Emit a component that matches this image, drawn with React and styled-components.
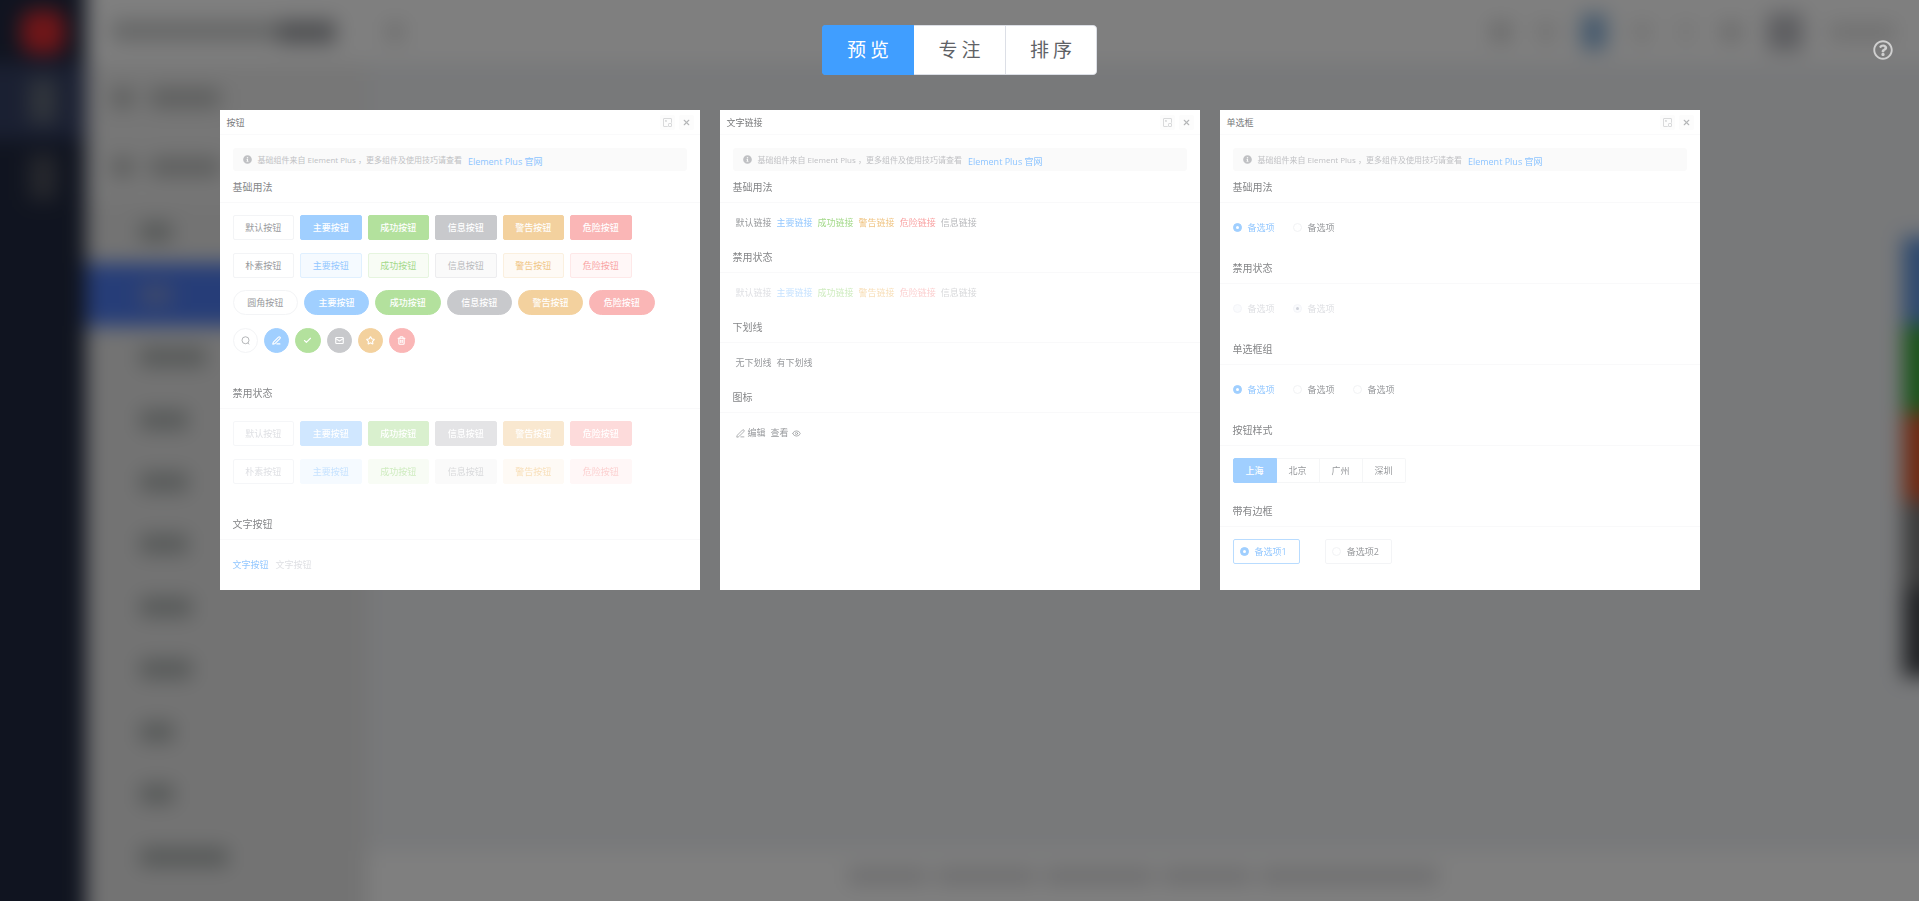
import React from "react";
import styled, { createGlobalStyle, css } from "styled-components";
import { PenLine, Check, Mail, Star, Trash2, Eye, X } from "lucide-react";
import { FaRegQuestionCircle, FaInfoCircle } from "react-icons/fa";

const GlobalStyle = createGlobalStyle`
  *, *::before, *::after { box-sizing: border-box; }
  body {
    margin: 0;
    background: #f0f2f5;
    font-family: "Open Sans", "Noto Sans CJK SC", sans-serif;
  }
  button, input { font: inherit; margin: 0; }
  svg { display: block; flex: none; }
`;

const tones = {
  default: { solid: "#ffffff", edge: "#f3f4f6", text: "#97999c", faint: "#dfe0e4", soft: "#ffffff", softEdge: "#f3f4f6", pale: "#ffffff" },
  primary: { solid: "#a0cfff", edge: "#a0cfff", text: "#92c7ff", faint: "#c6e2ff", soft: "#f5faff", softEdge: "#e0f0ff", pale: "#d0e7ff" },
  success: { solid: "#b3e19d", edge: "#b3e19d", text: "#a3d989", faint: "#cfecc0", soft: "#f8fcf5", softEdge: "#e6f5df", pale: "#d9f0ce" },
  info: { solid: "#c8c9cc", edge: "#c8c9cc", text: "#b8b9bc", faint: "#d8d9db", soft: "#fafafa", softEdge: "#ededef", pale: "#e4e4e6" },
  warning: { solid: "#f3d19e", edge: "#f3d19e", text: "#f0c584", faint: "#f8dfb9", soft: "#fefaf5", softEdge: "#fbf0df", pale: "#f9e8d0" },
  danger: { solid: "#fab6b6", edge: "#fab6b6", text: "#f9a3a3", faint: "#fcd0d0", soft: "#fff7f7", softEdge: "#fee8e8", pale: "#fddbdb" },
};

/* ---------- application behind the overlay ---------- */

/* The blurred layer bleeds past the window so its edges never fade out. */
const bleed = 30;

const Backdrop = styled.div`
  position: fixed;
  inset: -${bleed}px;
  display: flex;
  overflow: hidden;
  filter: blur(10px);
`;

const Rail = styled.div`
  flex: none;
  width: ${86 + bleed}px;
  padding-top: ${bleed}px;
  background: #212940;
`;

const RailLogo = styled.div`
  height: 63px;
  display: flex;
  align-items: center;
  justify-content: center;
  padding-left: ${bleed}px;
  &::after {
    content: "";
    width: 44px;
    height: 44px;
    border-radius: 14px;
    background: #e02c32;
  }
`;

const RailItem = styled.div`
  height: 76px;
  display: flex;
  align-items: center;
  justify-content: center;
  padding-left: ${bleed}px;
  background: ${(p) => (p.$active ? "#354064" : "transparent")};
  &::after {
    content: "";
    width: 28px;
    height: 46px;
    background: ${(p) => (p.$active ? "#626a78" : "#4c4f5a")};
  }
`;

const Shell = styled.div`
  flex: 1;
  min-width: 0;
  display: flex;
  flex-direction: column;
`;

const TopBar = styled.div`
  flex: none;
  height: ${63 + bleed}px;
  display: flex;
  align-items: center;
  gap: 26px;
  padding: ${bleed}px ${24 + bleed}px 0 26px;
  background: #ffffff;
`;

const Smudge = styled.div`
  flex: none;
  width: ${(p) => p.$w}px;
  height: ${(p) => p.$h || 20}px;
  background: ${(p) => p.$c || "#c8cccb"};
`;

const Spacer = styled.div`
  flex: 1;
`;

const Brand = styled.div`
  display: flex;
  margin-right: 24px;
`;

const Body = styled.div`
  flex: 1;
  min-height: 0;
  display: flex;
`;

const SideMenu = styled.div`
  flex: none;
  width: 281px;
  background: #e7e7e7;
`;

const MenuGroup = styled.div`
  height: 69px;
  display: flex;
  align-items: center;
  gap: 16px;
  padding-left: 26px;
  background: #eeeeee;
`;

const MenuList = styled.div`
  display: grid;
  grid-auto-rows: 1fr;
  height: 687px;
`;

const MenuItem = styled.div`
  display: flex;
  align-items: center;
  padding-left: 54px;
  background: ${(p) => (p.$active ? "#4d7bf0" : "transparent")};
`;

const Content = styled.div`
  flex: 1;
  display: flex;
  flex-direction: column;
  background: #f0f2f5;
`;

const Workspace = styled.div`
  flex: 1;
  display: flex;
  align-items: center;
  justify-content: flex-end;
`;

const Swatches = styled.div`
  width: ${16 + bleed}px;
`;

const Swatch = styled.div`
  height: 88px;
  background: ${(p) => p.$c};
`;

const Footer = styled.div`
  height: ${50 + bleed}px;
  display: flex;
  align-items: center;
  justify-content: center;
  gap: 8px;
  padding: 0 ${bleed}px ${bleed}px 0;
  background: #ffffff;
`;

/* ---------- overlay ---------- */

const Overlay = styled.main`
  position: relative;
  min-height: 100vh;
  padding: 25px 26px;
  background: rgba(0, 0, 0, 0.5);
`;

const Toolbar = styled.header`
  display: grid;
  grid-template-columns: 1fr auto 1fr;
  align-items: center;
  margin-bottom: 35px;
`;

const Modes = styled.div`
  grid-column: 2;
  display: flex;
  height: 50px;
  border-radius: 4px;
  overflow: hidden;
`;

const Mode = styled.button`
  width: 92px;
  padding: 0 0 2px 4px;
  border: 1px solid ${(p) => (p.$active ? "#409eff" : "#dcdfe6")};
  border-left-width: ${(p) => (p.$active ? 1 : 0)}px;
  background: ${(p) => (p.$active ? "#409eff" : "#ffffff")};
  color: ${(p) => (p.$active ? "#ffffff" : "#606266")};
  font-size: 19px;
  letter-spacing: 4px;
  &:last-child {
    width: 91px;
    border-radius: 0 4px 4px 0;
  }
`;

const Help = styled.button`
  justify-self: end;
  padding: 0;
  border: 0;
  background: none;
  color: #d0d0d0;
`;

const Cards = styled.div`
  display: flex;
  flex-wrap: wrap;
  justify-content: center;
  gap: 20px;
`;

const Card = styled.section`
  width: 480px;
  min-height: 480px;
  background: #ffffff;
  font-size: 9px;
`;

const CardHeader = styled.div`
  display: flex;
  align-items: center;
  gap: 4px;
  height: 25px;
  padding: 0 6px 0 7px;
  border-bottom: 1px solid #fafafb;
`;

const CardTitle = styled.h2`
  flex: 1;
  margin: 0;
  font-size: 9px;
  font-weight: 400;
  color: #78797b;
`;

const Tool = styled.button`
  width: 15px;
  height: 15px;
  display: grid;
  place-items: center;
  padding: 0;
  border: 0;
  border-radius: 2px;
  background: #fcfcfc;
  color: ${(p) => p.$color};
`;

const Notice = styled.div`
  display: flex;
  align-items: center;
  height: 23px;
  margin: 13px 13px 0;
  padding: 0 10px;
  border-radius: 3px;
  background: #fafafa;
  font-size: 8px;
  color: #c0c1c4;
`;

const NoticeText = styled.p`
  margin: 0 6px;
`;

const NoticeLink = styled.a`
  padding-top: 3px;
  font-size: 9px;
  color: #8ec5ff;
  text-decoration: none;
`;

const Heading = styled.h3`
  height: 32px;
  margin: 0;
  padding: 0 13px;
  border-bottom: 1px solid #f9f9fa;
  font-size: 10px;
  line-height: 32px;
  font-weight: 400;
  color: #858688;
`;

const Block = styled.div`
  padding: 12px 13px 24px;
  &:last-child { padding-bottom: 12px; }
`;

const Rows = styled.div`
  display: grid;
  align-content: space-between;
  height: ${(p) => p.$height}px;
`;

const ButtonRow = styled.div`
  display: grid;
  grid-template-columns: repeat(6, 1fr);
  gap: 6px;
  width: ${(p) => p.$width}px;
`;

const variants = {
  solid: (t, kind) => css`
    background: ${t.solid};
    border-color: ${t.edge};
    color: ${kind === "default" ? t.text : "#ffffff"};
    font-weight: ${kind === "default" ? 400 : 500};
    &:disabled {
      background: ${t.pale};
      border-color: ${kind === "default" ? "#f5f6f8" : t.pale};
      color: ${kind === "default" ? t.faint : "#ffffff"};
    }
  `,
  plain: (t, kind) => css`
    background: ${t.soft};
    border-color: ${t.softEdge};
    color: ${t.text};
    &:disabled {
      border-color: ${kind === "default" ? "#f5f6f8" : t.soft};
      color: ${t.faint};
    }
  `,
};

const Button = styled.button`
  display: flex;
  align-items: center;
  justify-content: center;
  height: 25px;
  padding: 0;
  border: 1px solid;
  border-radius: ${(p) => (p.$round ? 13 : 2)}px;
  font-size: 9px;
  ${(p) => variants[p.$variant](tones[p.$tone], p.$tone)}
`;

const TextButton = styled.button`
  padding: 0;
  margin-right: 7px;
  border: 0;
  background: none;
  line-height: 25px;
  color: ${tones.primary.text};
  &:disabled { color: ${tones.default.faint}; }
`;

const Links = styled.div`
  display: flex;
  gap: 5px;
  padding: 12px 16px 10px;
  line-height: 16px;
`;

const Link = styled.a`
  display: inline-flex;
  align-items: center;
  gap: 3px;
  color: ${(p) => (p.$disabled ? tones[p.$tone].faint : tones[p.$tone].text)};
  text-decoration: none;
`;

const Options = styled.div`
  display: flex;
  gap: ${(p) => p.$gap || 0}px;
  padding: 12px 13px;
`;

const Option = styled.label`
  display: flex;
  align-items: center;
  gap: 6px;
  height: 25px;
  color: ${tones.default.text};
  &:has(input:checked) { color: ${tones.primary.text}; }
  &:has(input:disabled) { color: ${tones.default.faint}; }
  ${(p) =>
    p.$bordered &&
    css`
      padding: 0 12px 0 6px;
      border: 1px solid #f3f4f6;
      border-radius: 2px;
      &:has(input:checked) { border-color: #b9dcff; }
    `}
`;

const Radio = styled.input`
  appearance: none;
  display: grid;
  place-items: center;
  width: 9px;
  height: 9px;
  border: 1px solid #f1f2f4;
  border-radius: 50%;
  background: #ffffff;
  &::before {
    content: "";
    width: 3px;
    height: 3px;
    border-radius: 50%;
  }
  &:checked { border-color: #a0cfff; background: #a0cfff; }
  &:checked::before { background: #ffffff; }
  &:disabled { border-color: #f3f4f8; background: #fafbfd; }
  &:disabled:checked::before { background: #cfd2da; }
`;

const City = styled.label`
  position: relative;
  width: 43px;
  height: 25px;
  border: solid #f5f6f7;
  border-width: 1px 1px 1px 0;
  line-height: 23px;
  text-align: center;
  color: ${tones.default.text};
  &:first-child { width: 44px; border-left-width: 1px; border-radius: 2px 0 0 2px; }
  &:last-child { border-radius: 0 2px 2px 0; }
  &:has(input:checked) {
    background: #a0cfff;
    border-color: #a0cfff;
    color: #ffffff;
    font-weight: 500;
  }
  input {
    position: absolute;
    inset: 0;
    opacity: 0;
  }
`;

const SearchIcon = () => (
  <svg width="9" height="9" viewBox="0 0 18 18" fill="none" stroke="currentColor" strokeWidth="1.4" aria-hidden="true">
    <circle cx="9" cy="8.5" r="7" />
    <path d="M13.5 14l3 2.500" />
  </svg>
);

const ExpandIcon = () => (
  <svg width="9" height="9" viewBox="0 0 18 18" fill="none" stroke="currentColor" strokeWidth="1.6" aria-hidden="true">
    <path d="M9.500 17H2a1 1 0 0 1-1-1V2a1 1 0 0 1 1-1h14a1 1 0 0 1 1 1v7.500" />
    <path d="M5 7.500V5h2.500M5 5l2.500 2.500" />
    <rect x="11" y="11" width="6" height="6" rx="1" />
  </svg>
);

const kinds = [
  ["primary", "主要"],
  ["success", "成功"],
  ["info", "信息"],
  ["warning", "警告"],
  ["danger", "危险"],
];

const icons = [
  ["default", "搜索", SearchIcon],
  ["primary", "编辑", PenLine],
  ["success", "确认", Check],
  ["info", "消息", Mail],
  ["warning", "收藏", Star],
  ["danger", "删除", Trash2],
];

function Buttons({ first, variant = "solid", round, disabled }) {
  return (
    <ButtonRow $width={round ? 422 : 399}>
      {[["default", first], ...kinds].map(([tone, label]) => (
        <Button key={tone} type="button" $tone={tone} $variant={variant} $round={round} disabled={disabled}>
          {label}按钮
        </Button>
      ))}
    </ButtonRow>
  );
}

function LinkRow({ disabled }) {
  const [primary, success, info, warning, danger] = kinds;
  return (
    <Links>
      {[["default", "默认"], primary, success, warning, danger, info].map(([tone, label]) => (
        <Link key={tone} href="#" $tone={tone} $disabled={disabled} aria-disabled={disabled}>
          {label}链接
        </Link>
      ))}
    </Links>
  );
}

function RadioSet({ name, labels, checked, disabled, bordered }) {
  return (
    <Options $gap={bordered ? 25 : 18}>
      {labels.map((label, i) => (
        <Option key={i} $bordered={bordered}>
          <Radio type="radio" name={name} defaultChecked={i === checked} disabled={disabled} />
          {label}
        </Option>
      ))}
    </Options>
  );
}

function Preview({ title, children }) {
  return (
    <Card>
      <CardHeader>
        <CardTitle>{title}</CardTitle>
        <Tool type="button" aria-label="最大化" $color="#cfd0d2"><ExpandIcon /></Tool>
        <Tool type="button" aria-label="关闭" $color="#b4b5b7"><X size={9} strokeWidth={3} /></Tool>
      </CardHeader>
      <Notice>
        <FaInfoCircle size={9} />
        <NoticeText>基础组件来自 Element Plus ，更多组件及使用技巧请查看</NoticeText>
        <NoticeLink href="#">Element Plus 官网</NoticeLink>
      </Notice>
      {children}
    </Card>
  );
}

function Application() {
  return (
    <Backdrop aria-hidden="true">
      <Rail>
        <RailLogo />
        <RailItem $active />
        <RailItem />
      </Rail>
      <Shell>
        <TopBar>
          <Brand>
            <Smudge $w={166} $h={22} $c="#cfd1d1" />
            <Smudge $w={58} $h={24} $c="#a2a4a8" />
          </Brand>
          <Smudge $w={18} $h={20} $c="#dedede" />
          <Spacer />
          <Smudge $w={20} $c="#d4d4d4" />
          <Smudge $w={18} $c="#e4e4e4" />
          <Smudge $w={26} $h={36} $c="#8fb6dc" />
          <Smudge $w={18} $c="#e6e6e6" />
          <Smudge $w={18} $c="#eeeeee" />
          <Smudge $w={20} $c="#d6d6d6" />
          <Smudge $w={36} $h={38} $c="#bdbec4" />
          <Smudge $w={66} $h={18} $c="#e2e2e2" />
        </TopBar>
        <Body>
          <SideMenu>
            <MenuGroup><Smudge $w={22} $c="#bcbebd" /><Smudge $w={70} $c="#bcbebd" /></MenuGroup>
            <MenuGroup><Smudge $w={22} $c="#bcbebd" /><Smudge $w={70} $c="#bcbebd" /></MenuGroup>
            <MenuList>
              {[32, 32, 66, 48, 48, 48, 52, 52, 34, 34, 88].map((w, i) => (
                <MenuItem key={i} $active={i === 1}>
                  <Smudge $w={w} $c={i === 1 ? "#7c93d8" : "#aeb3b2"} />
                </MenuItem>
              ))}
            </MenuList>
          </SideMenu>
          <Content>
            <Workspace>
              <Swatches>
                {["#5c93dc", "#38a838", "#dc5428", "#767676", "#44474c"].map((c) => (
                  <Swatch key={c} $c={c} />
                ))}
              </Swatches>
            </Workspace>
            <Footer>
              {[80, 100, 110, 90, 178].map((w, i) => (
                <Smudge key={i} $w={w} $h={18} $c="#dedee0" />
              ))}
            </Footer>
          </Content>
        </Body>
      </Shell>
    </Backdrop>
  );
}

export default function App() {
  return (
    <>
      <GlobalStyle />
      <Application />
      <Overlay>
        <Toolbar>
          <Modes>
            <Mode type="button" $active>预览</Mode>
            <Mode type="button">专注</Mode>
            <Mode type="button">排序</Mode>
          </Modes>
          <Help type="button" aria-label="帮助"><FaRegQuestionCircle size={20} /></Help>
        </Toolbar>
        <Cards>
          <Preview title="按钮">
            <Heading>基础用法</Heading>
            <Block>
              <Rows $height={138}>
                <Buttons first="默认" />
                <Buttons first="朴素" variant="plain" />
                <Buttons first="圆角" round />
                <ButtonRow $width={182}>
                  {icons.map(([tone, label, Icon]) => (
                    <Button key={tone} type="button" $tone={tone} $variant="solid" $round aria-label={label}>
                      <Icon size={9} strokeWidth={3} />
                    </Button>
                  ))}
                </ButtonRow>
              </Rows>
            </Block>
            <Heading>禁用状态</Heading>
            <Block>
              <Rows $height={63}>
                <Buttons first="默认" disabled />
                <Buttons first="朴素" variant="plain" disabled />
              </Rows>
            </Block>
            <Heading>文字按钮</Heading>
            <Block>
              <TextButton type="button">文字按钮</TextButton>
              <TextButton type="button" disabled>文字按钮</TextButton>
            </Block>
          </Preview>

          <Preview title="文字链接">
            <Heading>基础用法</Heading>
            <LinkRow />
            <Heading>禁用状态</Heading>
            <LinkRow disabled />
            <Heading>下划线</Heading>
            <Links>
              <Link href="#" $tone="default">无下划线</Link>
              <Link href="#" $tone="default">有下划线</Link>
            </Links>
            <Heading>图标</Heading>
            <Links>
              <Link href="#" $tone="default"><PenLine size={9} strokeWidth={2} />编辑</Link>
              <Link href="#" $tone="default">查看<Eye size={9} strokeWidth={2} /></Link>
            </Links>
          </Preview>

          <Preview title="单选框">
            <Heading>基础用法</Heading>
            <RadioSet name="basic" labels={["备选项", "备选项"]} checked={0} />
            <Heading>禁用状态</Heading>
            <RadioSet name="disabled" labels={["备选项", "备选项"]} checked={1} disabled />
            <Heading>单选框组</Heading>
            <RadioSet name="group" labels={["备选项", "备选项", "备选项"]} checked={0} />
            <Heading>按钮样式</Heading>
            <Options>
              {["上海", "北京", "广州", "深圳"].map((city, i) => (
                <City key={city}>
                  <input type="radio" name="city" defaultChecked={i === 0} />
                  {city}
                </City>
              ))}
            </Options>
            <Heading>带有边框</Heading>
            <RadioSet name="bordered" labels={["备选项1", "备选项2"]} checked={0} bordered />
          </Preview>
        </Cards>
      </Overlay>
    </>
  );
}
